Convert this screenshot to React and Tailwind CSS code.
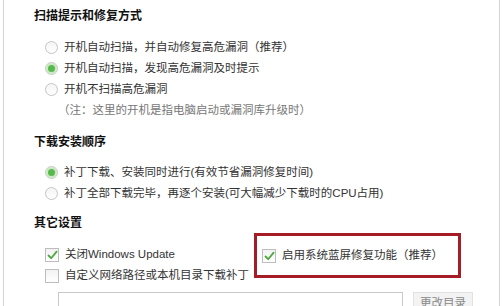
import React from 'react'

const font = { fontFamily: '"Liberation Sans", "Noto Sans CJK SC", sans-serif' }

const Radio = ({ checked }) => (
    <span className="relative w-[13px] h-[13px] rounded-full border border-[#c4c4c4] bg-gradient-to-b from-[#f4f4f4] to-white flex items-center justify-center shrink-0">
        {checked && (
            <span className="w-[7px] h-[7px] rounded-full bg-[#58b84c] ring-2 ring-[#c9eac2]" />
        )}
    </span>
)

const Checkbox = ({ checked }) => (
    <span className="w-[14px] h-[14px] border border-[#bdbdbd] bg-gradient-to-b from-[#f2f2f2] to-white flex items-center justify-center shrink-0">
        {checked && (
            <svg width="11" height="10" viewBox="0 0 11 10">
                <path d="M1.5 5.5 L4.2 8.2 L9.6 1.6" fill="none" stroke="#4aa83c" strokeWidth="1.8" strokeLinecap="round" strokeLinejoin="round" />
            </svg>
        )}
    </span>
)

const Title = ({ children, className = '' }) => (
    <div className={`h-[20px] flex items-center text-[12px] font-bold text-[#111] ${className}`}>{children}</div>
)

const Option = ({ children, checked }) => (
    <div className="h-[21px] flex items-center pl-[11px] gap-[6px] text-[11.5px] text-[#333]">
        <Radio checked={checked} />
        <span>{children}</span>
    </div>
)

export default function App() {
    return (
        <div className="w-[502px] h-[306px] bg-white overflow-hidden" style={font}>
            <div className="h-full mx-[3px] w-[497px] border-x border-[#d4d4d4] pl-[30px] pt-[6px]">
                {/* 扫描 */}
                <Title>扫描提示和修复方式</Title>
                <div className="mt-[11px]">
                    <Option>开机自动扫描，并自动修复高危漏洞（推荐）</Option>
                    <Option checked>开机自动扫描，发现高危漏洞及时提示</Option>
                    <Option>开机不扫描高危漏洞</Option>
                    <div className="h-[21px] flex items-center pl-[24px] text-[11.5px] text-[#777]">
                        （注：这里的开机是指电脑启动或漏洞库升级时）
                    </div>
                </div>

                {/* 下载 */}
                <Title className="mt-[11px]">下载安装顺序</Title>
                <div className="mt-[10px]">
                    <Option checked>补丁下载、安装同时进行(有效节省漏洞修复时间)</Option>
                    <Option>补丁全部下载完毕，再逐个安装(可大幅减少下载时的CPU占用)</Option>
                </div>

                {/* 其它 */}
                <Title className="mt-[9px]">其它设置</Title>
                <div className="mt-[11px] flex items-start">
                    <div className="w-[220px] pl-[11px] text-[11.5px] text-[#333]">
                        <div className="h-[21px] flex items-center gap-[6px]">
                            <Checkbox checked />
                            <span>关闭Windows Update</span>
                        </div>
                        <div className="h-[21px] flex items-center gap-[6px]">
                            <Checkbox />
                            <span>自定义网络路径或本机目录下载补丁</span>
                        </div>
                    </div>
                    <div className="mt-[-11px] w-[207px] h-[45px] border-[3px] border-[#a61c26] flex items-center pl-[5px] gap-[6px] text-[11.5px] text-[#333]">
                        <Checkbox checked />
                        <span>启用系统蓝屏修复功能（推荐）</span>
                    </div>
                </div>

                <div className="mt-[6px] flex items-start pl-[24px]">
                    <div className="w-[345px] h-[24px] border border-[#c8c8c8] bg-white" />
                    <div className="ml-[10px] w-[60px] h-[24px] border border-[#e2e2e2] bg-[#f3f3f3] flex items-center justify-center text-[11.5px] text-[#888]">
                        更改目录
                    </div>
                </div>
            </div>
        </div>
    )
}
